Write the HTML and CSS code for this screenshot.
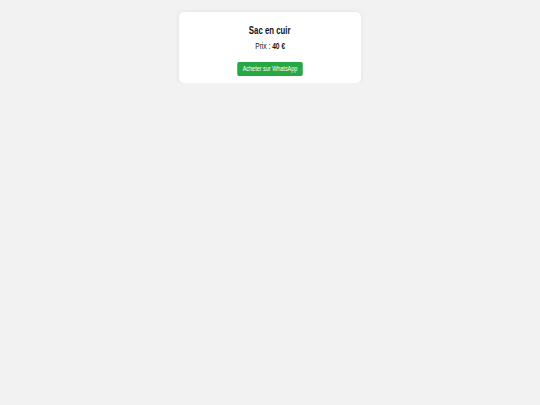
FILE: index.html
```html
<!DOCTYPE html>
<html lang="fr">
<head>
<meta charset="utf-8">
<title>Sac en cuir</title>
<link rel="stylesheet" href="styles.css">
</head>
<body>
  <div class="product-card">
    <h2 class="product-title"><span class="narrow">Sac en cuir</span></h2>
    <p class="product-price"><span class="narrow">Prix : <strong>40 €</strong></span></p>
    <a class="buy-button narrow" href="#">Acheter sur WhatsApp</a>
  </div>
</body>
</html>
```

FILE: styles.css
```css
html, body {
  margin: 0;
  padding: 0;
}

body {
  background: #f2f2f2;
  font-family: "Liberation Sans", Arial, Helvetica, sans-serif;
  color: #111;
}

.product-card {
  box-sizing: border-box;
  width: 182px;
  margin: 12px auto 0;
  padding: 13px 10px 7px;
  background: #fff;
  border-radius: 5px;
  box-shadow: 0 0 4px rgba(0, 0, 0, 0.08);
  text-align: center;
}

/* condensed look for the card's type */
.narrow {
  display: inline-block;
  transform: scaleX(0.78);
}

.product-title {
  margin: 0;
  font-size: 10px;
  line-height: 12px;
  font-weight: bold;
}

.product-price {
  margin: 4px 0 0;
  font-size: 8.5px;
  line-height: 10px;
}

.buy-button {
  margin-top: 11px;
  padding: 0 7px;
  height: 14px;
  line-height: 14px;
  font-size: 7px;
  color: #fff;
  background: #28a745;
  border-radius: 2px;
  text-decoration: none;
}
```
